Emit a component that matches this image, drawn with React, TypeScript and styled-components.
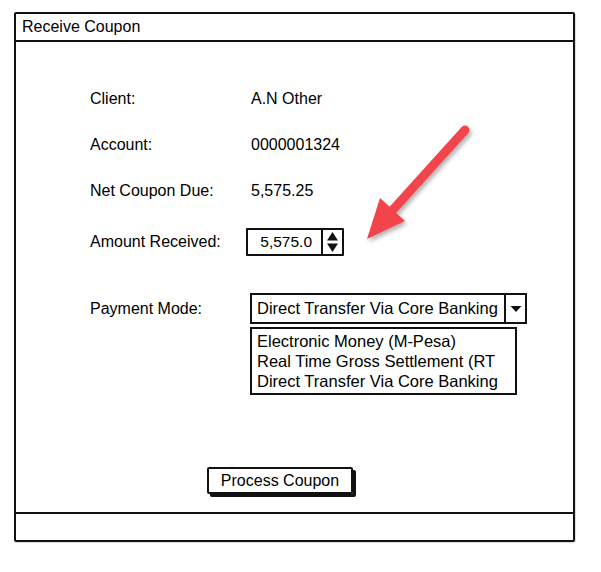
import React from "react";
import styled, { createGlobalStyle } from "styled-components";

const Global = createGlobalStyle`
  html, body { margin: 0; padding: 0; background: #fff; }
  body { font-family: "Liberation Sans", Arial, sans-serif; color: #000; }
`;

const Page = styled.div`
  width: 601px;
  height: 572px;
  padding: 12px 0 0 14px;
  box-sizing: border-box;
  position: relative;
`;

const Window = styled.div`
  width: 561px;
  height: 530px;
  box-sizing: border-box;
  border: 2.5px solid #111;
  border-radius: 2px;
  display: flex;
  flex-direction: column;
  box-shadow: 1px 1px 1px rgba(0,0,0,0.15);
`;

const TitleBar = styled.div`
  height: 26px;
  flex: none;
  border-bottom: 2.5px solid #111;
  display: flex;
  align-items: center;
  padding-left: 6px;
  font-size: 16px;
`;

const Body = styled.div`
  flex: 1;
  display: flex;
  flex-direction: column;
  padding: 33px 0 0 74px;
  position: relative;
`;

const Row = styled.div<{ $h: number }>`
  display: grid;
  grid-template-columns: 161px 1fr;
  align-items: center;
  height: ${(p) => p.$h}px;
  font-size: 16px;
`;

const TopRow = styled(Row)`
  align-items: start;
  margin-top: 30px;
`;

const Label = styled.div``;
const Value = styled.div``;

const Spinner = styled.div`
  display: flex;
  width: 98px;
  height: 28px;
  margin-left: -5px;
  box-sizing: border-box;
  border: 2px solid #111;
  border-radius: 1px;
`;

const SpinValue = styled.div`
  flex: 1;
  display: flex;
  align-items: center;
  justify-content: flex-end;
  padding-right: 9px;
  font-size: 15.5px;
  border-right: 2px solid #111;
`;

const SpinArrows = styled.div`
  width: 19px;
  display: flex;
  align-items: center;
  justify-content: center;
`;

const Combo = styled.div`
  display: flex;
  flex-direction: column;
  margin-left: -1px;
  margin-top: -7px;
`;

const Select = styled.div`
  display: flex;
  width: 277px;
  height: 31px;
  box-sizing: border-box;
  border: 2px solid #111;
`;

const SelectText = styled.div`
  flex: 1;
  display: flex;
  align-items: center;
  padding-left: 5px;
  font-size: 16.5px;
  border-right: 2px solid #111;
  white-space: nowrap;
  overflow: hidden;
`;

const SelectBtn = styled.div`
  width: 19px;
  display: flex;
  align-items: center;
  justify-content: center;
`;

const List = styled.div`
  margin-top: 3px;
  width: 267px;
  height: 68px;
  box-sizing: border-box;
  border: 2px solid #111;
  border-right-width: 2.5px;
  padding: 2px 0 0 5px;
  display: flex;
  flex-direction: column;
  font-size: 16.5px;
  line-height: 20px;
  white-space: nowrap;
  overflow: hidden;
`;

const ButtonRow = styled.div`
  display: flex;
  padding-left: 117px;
  margin-top: 63px;
`;

const Button = styled.div`
  width: 146px;
  height: 27px;
  box-sizing: border-box;
  border: 2px solid #111;
  border-radius: 2px;
  box-shadow: 3px 3px 0 #111;
  display: flex;
  align-items: center;
  justify-content: center;
  font-size: 16px;
`;

const Footer = styled.div`
  height: 26px;
  flex: none;
  border-top: 2.5px solid #111;
`;

const Arrow = styled.svg`
  position: absolute;
  left: 355px;
  top: 115px;
  overflow: visible;
`;

export default function App() {
  return (
    <Page>
      <Global />
      <Window>
        <TitleBar>Receive Coupon</TitleBar>
        <Body>
          <Row $h={47}>
            <Label>Client:</Label>
            <Value>A.N Other</Value>
          </Row>
          <Row $h={46}>
            <Label>Account:</Label>
            <Value>0000001324</Value>
          </Row>
          <Row $h={46}>
            <Label>Net Coupon Due:</Label>
            <Value>5,575.25</Value>
          </Row>
          <Row $h={56}>
            <Label>Amount Received:</Label>
            <Spinner>
              <SpinValue>5,575.0</SpinValue>
              <SpinArrows>
                <svg width="13" height="22" viewBox="0 0 13 22">
                  <path d="M6.5 1 L12 9.5 H1 Z" fill="#111" />
                  <path d="M6.5 21 L12 12.5 H1 Z" fill="#111" />
                </svg>
              </SpinArrows>
            </Spinner>
          </Row>
          <TopRow $h={104}>
            <Label>Payment Mode:</Label>
            <Combo>
              <Select>
                <SelectText>Direct Transfer Via Core Banking</SelectText>
                <SelectBtn>
                  <svg width="12" height="8" viewBox="0 0 12 8">
                    <path d="M0.5 1 H11.5 L6 7 Z" fill="#111" />
                  </svg>
                </SelectBtn>
              </Select>
              <List>
                <span>Electronic Money (M-Pesa)</span>
                <span>Real Time Gross Settlement (RT</span>
                <span>Direct Transfer Via Core Banking</span>
              </List>
            </Combo>
          </TopRow>
          <ButtonRow>
            <Button>Process Coupon</Button>
          </ButtonRow>
        </Body>
        <Footer />
      </Window>
      <Arrow width="130" height="140" viewBox="0 0 130 140">
        <defs>
          <filter id="sh" x="-20%" y="-20%" width="150%" height="150%">
            <feDropShadow dx="2" dy="3" stdDeviation="2" floodColor="#000" floodOpacity="0.3" />
          </filter>
        </defs>
        <g filter="url(#sh)">
          <path d="M110 15 L35 98" stroke="#f2444b" strokeWidth="9" strokeLinecap="round" fill="none" />
          <path d="M12 124 L25 83 L50 106 Z" fill="#f2444b" />
        </g>
      </Arrow>
    </Page>
  );
}
